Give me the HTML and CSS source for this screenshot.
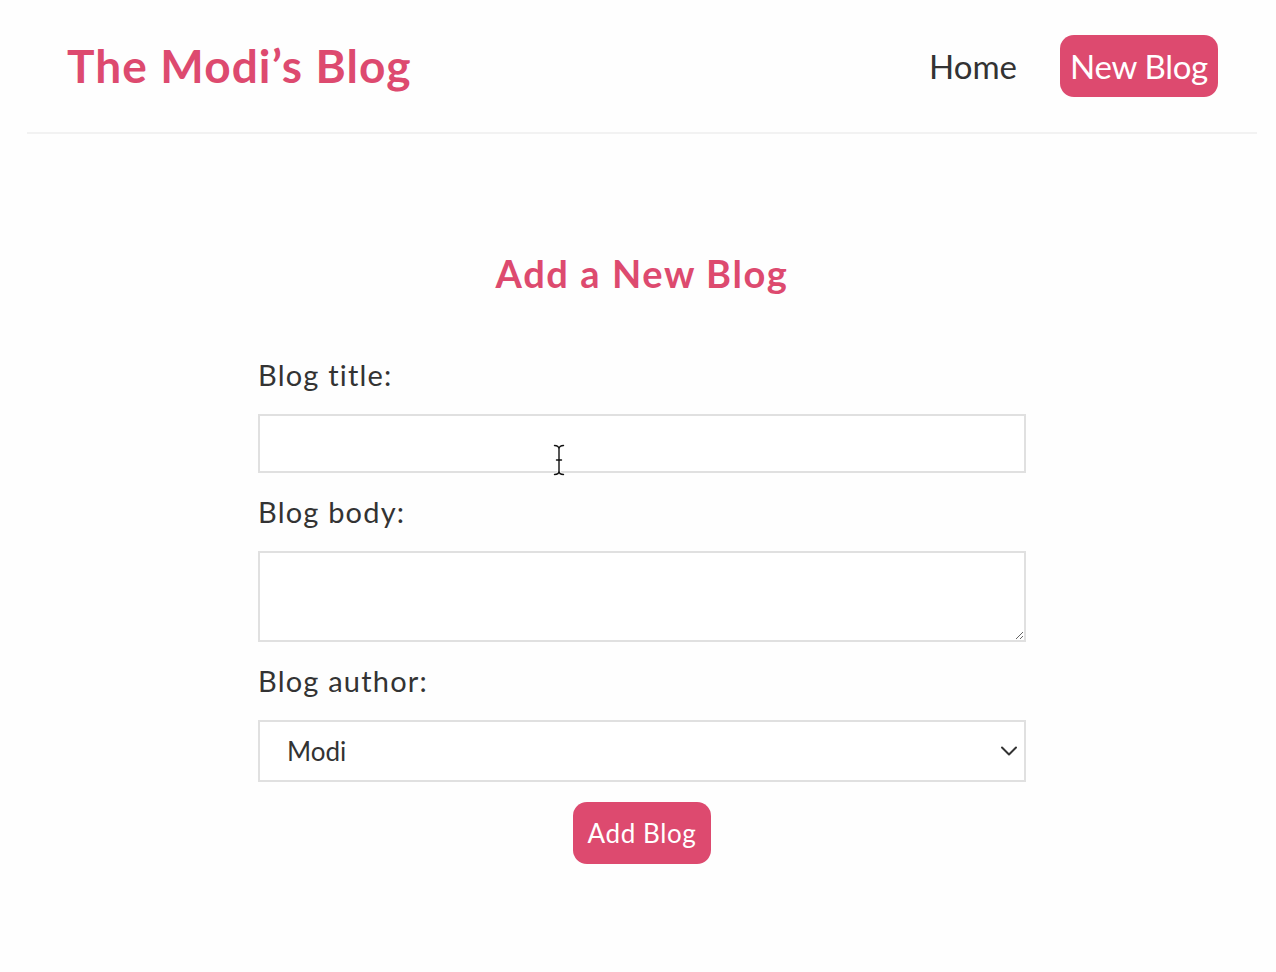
FILE: index.html
```html
<!DOCTYPE html>
<html lang="en">
<head>
<meta charset="utf-8">
<title>The Modi's Blog</title>
<link rel="stylesheet" href="styles.css">
</head>
<body>
<div class="app">
  <nav class="navbar">
    <h1 class="brand">The Modi’s Blog</h1>
    <div class="links">
      <a class="link" href="#">Home</a>
      <a class="link link-btn" href="#">New Blog</a>
    </div>
  </nav>
  <main class="content">
    <div class="create">
      <h2 class="create-title">Add a New Blog</h2>
      <form class="form">
        <label class="label">Blog title:</label>
        <div class="field-wrap">
          <input class="field" type="text">
          <svg class="cursor" width="12" height="32" viewBox="0 0 12 32" aria-hidden="true">
            <path d="M1.5 1.5 C4 1.5 6 2.5 6 5 L6 27 C6 29.5 4 30.5 1.5 30.5 M10.5 1.5 C8 1.5 6 2.5 6 5 M6 27 C6 29.5 8 30.5 10.5 30.5 M3.5 16 L8.5 16" fill="none" stroke="#ffffff" stroke-width="3.2" stroke-linecap="round"/>
            <path d="M1.5 1.5 C4 1.5 6 2.5 6 5 L6 27 C6 29.5 4 30.5 1.5 30.5 M10.5 1.5 C8 1.5 6 2.5 6 5 M6 27 C6 29.5 8 30.5 10.5 30.5 M3.5 16 L8.5 16" fill="none" stroke="#111111" stroke-width="1.4" stroke-linecap="round"/>
          </svg>
        </div>
        <label class="label">Blog body:</label>
        <textarea class="field area"></textarea>
        <label class="label">Blog author:</label>
        <div class="select-wrap">
          <select class="field select">
            <option>Modi</option>
            <option>Ninja</option>
          </select>
          <svg class="chevron" width="18" height="12" viewBox="0 0 18 12" aria-hidden="true">
            <path d="M2 2.5 L9 9.5 L16 2.5" fill="none" stroke="#333333" stroke-width="2" stroke-linecap="round" stroke-linejoin="round"/>
          </svg>
        </div>
        <button class="submit" type="button">Add Blog</button>
      </form>
    </div>
  </main>
</div>
</body>
</html>
```

FILE: styles.css
```css
* {
  margin: 0;
  box-sizing: border-box;
  font-family: "Lato", "Noto Sans", sans-serif;
  color: #333333;
}

body {
  margin: 0;
  background: #fefefe;
}

.app {
  margin: 0 19px 0 27px;
}

.navbar {
  display: flex;
  align-items: center;
  height: 134px;
  padding: 0 39px 1px 40px;
  border-bottom: 2px solid #f2f2f2;
}

.brand {
  font-size: 46px;
  font-weight: 700;
  color: #dd4a6f;
  line-height: 56px;
  letter-spacing: 1.1px;
}

.links {
  margin-left: auto;
  display: flex;
  align-items: center;
}

.link {
  font-size: 33px;
  text-decoration: none;
  line-height: 40px;
}

.link-btn {
  margin-left: 43px;
  height: 62px;
  width: 158px;
  display: flex;
  align-items: center;
  justify-content: center;
  background: #dd4a6f;
  color: #ffffff;
  border-radius: 14px;
  letter-spacing: -0.3px;
}

.content {
  padding-top: 116px;
}

.create {
  width: 768px;
  margin: 0 auto;
  text-align: center;
}

.create-title {
  font-size: 38px;
  line-height: 46px;
  font-weight: 700;
  color: #dd4a6f;
  margin-bottom: 60px;
  letter-spacing: 1.6px;
}

.label {
  display: block;
  text-align: left;
  font-size: 29px;
  line-height: 38px;
  letter-spacing: 1.2px;
}

.field-wrap,
.select-wrap {
  position: relative;
}

.field {
  display: block;
  width: 100%;
  margin: 20px 0;
  border: 2px solid #e0e0e0;
  background: #ffffff;
  outline: none;
}

input.field {
  height: 59px;
}

.area {
  height: 91px;
}

.select {
  height: 62px;
  appearance: none;
  -webkit-appearance: none;
  padding: 0 0 0 27px;
  font-size: 26px;
  border-radius: 0;
}

.chevron {
  position: absolute;
  right: 8px;
  top: 25px;
}

.cursor {
  position: absolute;
  left: 295px;
  top: 30px;
}

.submit {
  width: 138px;
  height: 62px;
  border: 0;
  border-radius: 14px;
  background: #dd4a6f;
  color: #ffffff;
  font-size: 26px;
  letter-spacing: 0.6px;
  cursor: pointer;
}
```
